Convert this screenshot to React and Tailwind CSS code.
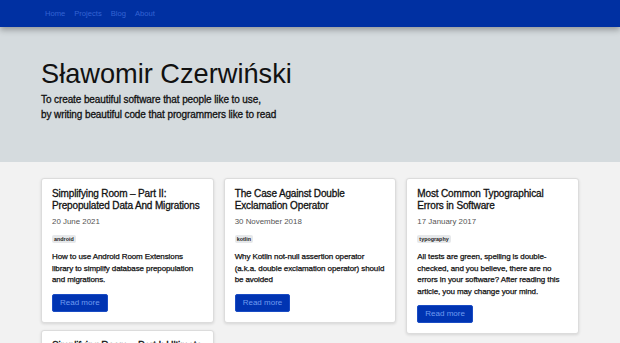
import React from 'react';

const posts = [
  [
    {
      title: 'Simplifying Room – Part II: Prepopulated Data And Migrations',
      date: '20 June 2021',
      tag: 'android',
      excerpt: 'How to use Android Room Extensions library to simplify database prepopulation and migrations.',
    },
    {
      title: 'Simplifying Room – Part I: Ultimate Guide To Room Extensions',
      date: '13 June 2021',
      tag: 'android',
      excerpt: 'How to get rid of Room boilerplate code.',
    },
  ],
  [
    {
      title: 'The Case Against Double Exclamation Operator',
      date: '30 November 2018',
      tag: 'kotlin',
      excerpt: 'Why Kotlin not-null assertion operator (a.k.a. double exclamation operator) should be avoided',
    },
  ],
  [
    {
      title: 'Most Common Typographical Errors in Software',
      date: '17 January 2017',
      tag: 'typography',
      excerpt: 'All tests are green, spelling is double-checked, and you believe, there are no errors in your software? After reading this article, you may change your mind.',
    },
  ],
];

const PostCard = ({ post }) => (
  <div className="bg-white border border-[#dcdcdc] rounded-[3px] shadow-[0_1px_3px_rgba(0,0,0,0.12)] px-[10px] pt-[9px] pb-[10px]">
    <h2 className="text-[10px] leading-[12px] tracking-[-0.15px] text-[#111] [-webkit-text-stroke:0.3px_#111]">
      {post.title}
    </h2>
    <div className="mt-[4px] text-[7.9px] leading-[11px] text-[#555]">{post.date}</div>
    <div className="mt-[8px] flex">
      <span className="bg-[#e6e8ea] rounded-[2px] px-[2px] text-[5.4px] leading-[8px] font-bold text-[#222]">
        {post.tag}
      </span>
    </div>
    <p className="mt-[8px] text-[8px] leading-[11.5px] tracking-[-0.1px] text-[#111] [-webkit-text-stroke:0.25px_#111]">
      {post.excerpt}
    </p>
    <button className="mt-[8px] bg-[#0034b2] border border-[#1a4cc4] rounded-[2px] h-[18px] px-[7px] text-[8px] text-[#6f9bef]">
      Read more
    </button>
  </div>
);

export default function App() {
  return (
    <div className="min-h-screen bg-[#f2f2f2] font-['Liberation_Sans',Arial,sans-serif]">
      <nav className="relative z-10 h-[27px] bg-[#0030a2] shadow-[0_3px_6px_rgba(0,0,0,0.3)]">
        <div className="mx-auto w-[538px] h-full flex items-center gap-[9px] pl-[4px] text-[7.6px] text-[#3463d2]">
          <a>Home</a>
          <a>Projects</a>
          <a>Blog</a>
          <a>About</a>
        </div>
      </nav>
      <header className="bg-[#d5dbde] h-[135px] pt-[31px]">
        <div className="mx-auto w-[538px]">
          <h1 className="text-[27.2px] leading-[31px] text-[#111]">Sławomir Czerwiński</h1>
          <p className="mt-[3px] text-[10px] leading-[15px] tracking-[-0.1px] text-[#111] [-webkit-text-stroke:0.3px_#111]">
            To create beautiful software that people like to use,
            <br />
            by writing beautiful code that programmers like to read
          </p>
        </div>
      </header>
      <main className="mx-auto w-[538px] pt-[16px] flex gap-[10px] items-start">
        {posts.map((col, i) => (
          <div key={i} className="flex-1 flex flex-col gap-[7px]">
            {col.map((post) => (
              <PostCard key={post.title} post={post} />
            ))}
          </div>
        ))}
      </main>
    </div>
  );
}
